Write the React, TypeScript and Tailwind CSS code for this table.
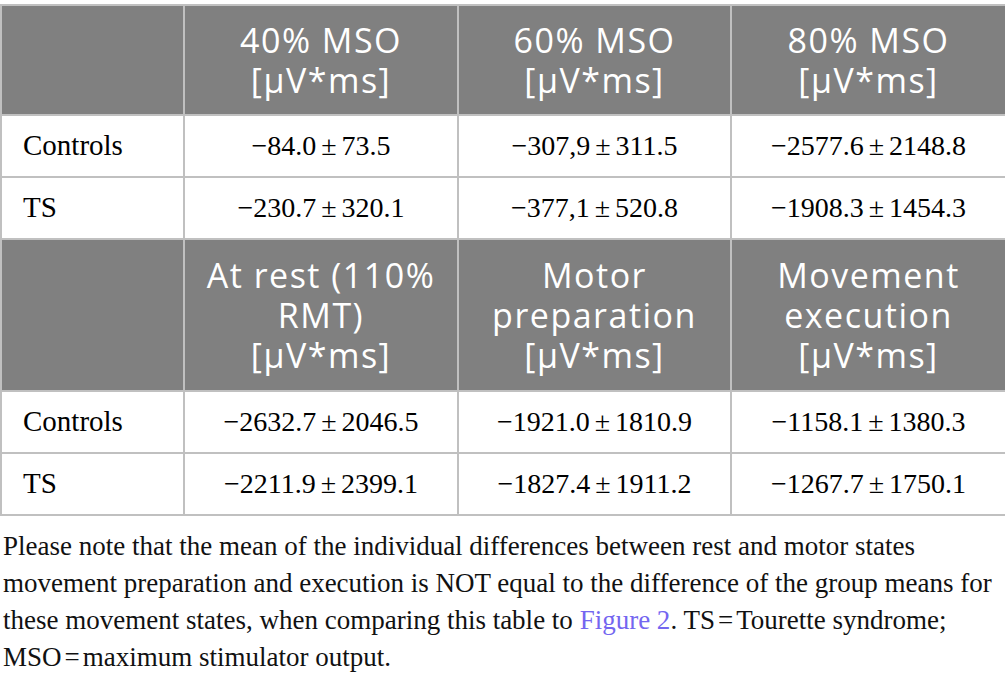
const groups = [
  {
    heads: [["40% MSO", "[μV*ms]"], ["60% MSO", "[μV*ms]"], ["80% MSO", "[μV*ms]"]],
    rows: [
      ["Controls", ["−84.0", "73.5"], ["−307,9", "311.5"], ["−2577.6", "2148.8"]],
      ["TS", ["−230.7", "320.1"], ["−377,1", "520.8"], ["−1908.3", "1454.3"]],
    ],
    headH: "h-[110px]",
  },
  {
    heads: [
      ["At rest (110%", "RMT)", "[μV*ms]"],
      ["Motor", "preparation", "[μV*ms]"],
      ["Movement", "execution", "[μV*ms]"],
    ],
    rows: [
      ["Controls", ["−2632.7", "2046.5"], ["−1921.0", "1810.9"], ["−1158.1", "1380.3"]],
      ["TS", ["−2211.9", "2399.1"], ["−1827.4", "1911.2"], ["−1267.7", "1750.1"]],
    ],
    headH: "h-[152px]",
  },
] as const;

function Value({ v }: { v: readonly [string, string] }) {
  return (
    <span>
      {v[0]}
      <span className="mx-[5px]">±</span>
      {v[1]}
    </span>
  );
}

export default function App() {
  return (
    <div className="w-[1005px] bg-white pt-[4px] text-black">
      <table className="w-[1005px] table-fixed border-collapse">
        <colgroup>
          <col className="w-[183px]" />
          <col className="w-[274px]" />
          <col className="w-[273px]" />
          <col className="w-[275px]" />
        </colgroup>
        {groups.map((g, gi) => (
          <tbody key={gi}>
            <tr className={`${g.headH} bg-[#808080]`}>
              <th className="border-2 border-[#c0c0c0]" />
              {g.heads.map((h, i) => (
                <th
                  key={i}
                  className="border-2 border-[#c0c0c0] text-center align-middle text-[34px] font-normal leading-[40px] tracking-[1.5px] text-white font-['Open_Sans',sans-serif]"
                >
                  {h.map((line) => (
                    <div key={line}>{line}</div>
                  ))}
                </th>
              ))}
            </tr>
            {g.rows.map((r) => (
              <tr key={r[0]} className="h-[62px] font-['Liberation_Serif',serif] text-[28px]">
                <td className="border-2 border-[#c0c0c0] pl-[21px] text-[29px]">{r[0]}</td>
                {r.slice(1).map((v, i) => (
                  <td key={i} className="border-2 border-[#c0c0c0] text-center">
                    <Value v={v as readonly [string, string]} />
                  </td>
                ))}
              </tr>
            ))}
          </tbody>
        ))}
      </table>
      <p className="mt-[12px] pl-[3px] font-['Liberation_Serif',serif] text-[27px] leading-[37px] text-[#111]">
        Please note that the mean of the individual differences between rest and motor states
        <br />
        movement preparation and execution is NOT equal to the difference of the group means for
        <br />
        these movement states, when comparing this table to{" "}
        <a className="text-[#7466f0]">Figure 2</a>. TS<span className="mx-[3px]">=</span>Tourette syndrome;
        <br />
        MSO<span className="mx-[3px]">=</span>maximum stimulator output.
      </p>
    </div>
  );
}
